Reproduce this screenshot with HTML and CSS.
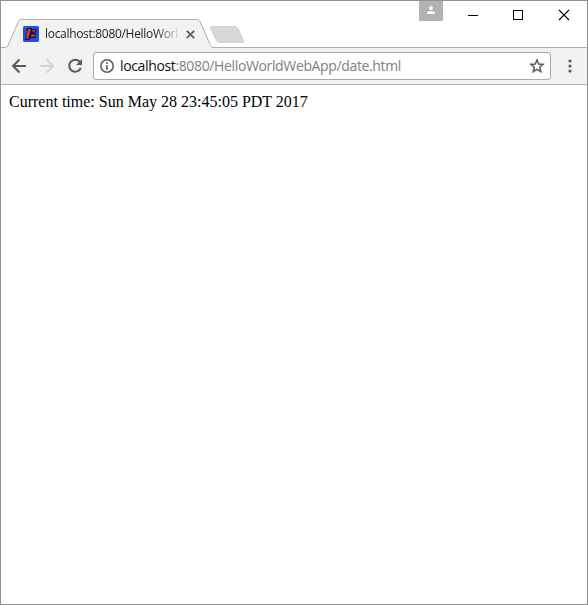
FILE: index.html
```html
<!DOCTYPE html>
<html lang="en">
<head>
<meta charset="utf-8">
<title>localhost:8080/HelloWorldWebApp/date.html</title>
<link rel="stylesheet" href="styles.css">
</head>
<body>
<div class="window">
  <header class="tabstrip">
    <svg class="tab-shape" width="250" height="29" viewBox="0 0 250 29">
      <path d="M1 28.500H5.500Q7 28.500 8 26.500L18.500 2.500Q19.500 .5 21 .5H197.500Q199 .5 200 2.500L210.500 26.500Q211.500 28.500 213 28.500H250V29H1Z" fill="#f2f2f2"/>
      <path d="M1 28.500H5.500Q7 28.500 8 26.500L18.500 2.500Q19.500 .5 21 .5H197.500Q199 .5 200 2.500L210.500 26.500Q211.500 28.500 213 28.500H250" fill="none" stroke="#adadad"/>
      <path d="M212 7.500H235Q237 7.500 238 9.500L243.500 21.500Q244.500 23.500 242.500 23.500H220Q217.500 23.500 216.500 21.500L210.500 9.500Q209.700 7.500 212 7.500Z" fill="#d8d8d8" stroke="#c9c9c9" stroke-width=".8"/>
    </svg>
    <div class="tab">
      <svg class="favicon" width="16" height="16" viewBox="0 0 16 16">
        <rect width="16" height="16" rx="1.500" fill="#1d50ea"/>
        <path d="M4 2H9L8.700 3.300H14L13.200 6.600H11.600L11.400 7.600H13.200L12.200 12H7L6.500 14H2L4.300 5H3.300Z" fill="#17122e"/>
        <path d="M5 3H7.800L5.200 12.800H3.200ZM9.300 4.300H12.700L12.400 5.600H9ZM8.500 8.600H12L11.500 10.800H7.900Z" fill="#f03a26"/>
      </svg>
      <span class="tab-title">localhost:8080/HelloWorl</span>
      <svg class="tab-close" width="9" height="9" viewBox="0 0 9 9"><path d="M.8.8 8.200 8.200M8.200.8.8 8.200" stroke="#5a5a5a" stroke-width="1.700"/></svg>
    </div>
    <div class="controls">
      <div class="profile"><svg width="8" height="8" viewBox="0 0 8 8" fill="#fff"><circle cx="4" cy="2" r="1.900"/><path d="M0 8V6.600Q.5 5 4 5T8 6.600V8Z"/></svg></div>
      <svg class="caption" width="104" height="12" viewBox="0 0 104 12" fill="none" stroke="#000">
        <path d="M1 6.500H11" />
        <rect x="46.500" y="1.500" width="9" height="9"/>
        <path d="M92 1 102 11M102 1 92 11" stroke-width="1.100"/>
      </svg>
    </div>
  </header>
  <nav class="toolbar">
    <svg class="nav-icon" width="16" height="16" viewBox="0 0 16 16"><path d="M15 8H2.500M8.500 1.500 2 8 8.500 14.500" fill="none" stroke="#5a5a5a" stroke-width="2"/></svg>
    <svg class="nav-icon" width="16" height="16" viewBox="0 0 16 16"><path d="M1 8H13.500M7.500 1.500 14 8 7.500 14.500" fill="none" stroke="#d4d4d4" stroke-width="2"/></svg>
    <svg class="nav-icon" width="16" height="16" viewBox="0 0 16 16"><path d="M12.700 3.700A6 6 0 1 0 13.800 10" fill="none" stroke="#5a5a5a" stroke-width="2"/><path d="M15 1V7H9Z" fill="#5a5a5a"/></svg>
    <div class="omnibox">
      <svg class="info" width="14" height="14" viewBox="0 0 14 14"><circle cx="7" cy="7" r="6.200" fill="none" stroke="#5a5a5a" stroke-width="1.500"/><path d="M6.200 3.300H7.800V4.900H6.200ZM6.200 6.100H7.800V10.700H6.200Z" fill="#5a5a5a"/></svg>
      <span class="url"><span class="host">localhost</span>:8080/HelloWorldWebApp/date.html</span>
      <svg class="star" width="16" height="16" viewBox="0 0 16 16"><path d="M8 2 9.700 6.100 14.100 6.400 10.700 9.300 11.800 13.600 8 11.300 4.200 13.600 5.300 9.300 1.900 6.400 6.300 6.100Z" fill="none" stroke="#5a5a5a" stroke-width="1.500"/></svg>
    </div>
    <svg class="menu" width="4" height="14" viewBox="0 0 4 14" fill="#5a5a5a"><circle cx="2" cy="2" r="1.600"/><circle cx="2" cy="7" r="1.600"/><circle cx="2" cy="12" r="1.600"/></svg>
  </nav>
  <main class="page">Current time: Sun May 28 23:45:05 PDT 2017</main>
</div>
</body>
</html>
```
FILE: styles.css
```css
* { box-sizing: border-box; }
body { margin: 0; background: #fff; }
.window {
  width: 588px;
  height: 605px;
  border: 1px solid #919191;
  display: flex;
  flex-direction: column;
}
.tabstrip {
  position: relative;
  height: 47px;
  flex: none;
  display: flex;
  justify-content: space-between;
  background: linear-gradient(#adadad, #adadad) bottom right / 338px 1px no-repeat;
}
.tab-shape { position: absolute; left: -1px; bottom: 0; }
.tab {
  position: relative;
  display: flex;
  align-items: center;
  height: 28px;
  margin-top: 19px;
  padding-left: 22px;
}
.favicon { margin-right: 6px; }
.tab-title {
  width: 134px;
  margin-right: 6.5px;
  white-space: nowrap;
  font: 12px/16px "Open Sans", sans-serif;
  letter-spacing: -0.31px;
  color: #222;
  -webkit-mask-image: linear-gradient(90deg, #000 110px, transparent 137px);
  mask-image: linear-gradient(90deg, #000 110px, transparent 137px);
}
.controls { display: flex; align-items: flex-start; padding-right: 16px; }
.profile {
  width: 24px;
  height: 20px;
  margin-right: 24px;
  padding-top: 5px;
  display: flex;
  justify-content: center;
  background: #b2b2b2;
}
.caption { margin-top: 8px; }
.toolbar {
  height: 37px;
  flex: none;
  display: flex;
  align-items: center;
  padding-left: 10px;
  background: #f2f2f2;
  border-bottom: 1px solid #b4b4b4;
}
.nav-icon { margin-right: 12px; }
.omnibox {
  width: 458px;
  height: 28px;
  margin-left: -2px;
  display: flex;
  align-items: center;
  padding: 0 5px 0 6px;
  background: #fff;
  border: 1px solid #a9a9a9;
  border-radius: 3px;
}
.info { margin-right: 6px; }
.url {
  flex: 1;
  white-space: nowrap;
  font: 14px/20px "Open Sans", sans-serif;
  letter-spacing: -0.36px;
  color: #808080;
}
.host { color: #111; }
.menu { margin-left: 16.5px; }
.page {
  padding: 8px;
  font: 16px/18px "Liberation Serif", serif;
  color: #000;
}
```
